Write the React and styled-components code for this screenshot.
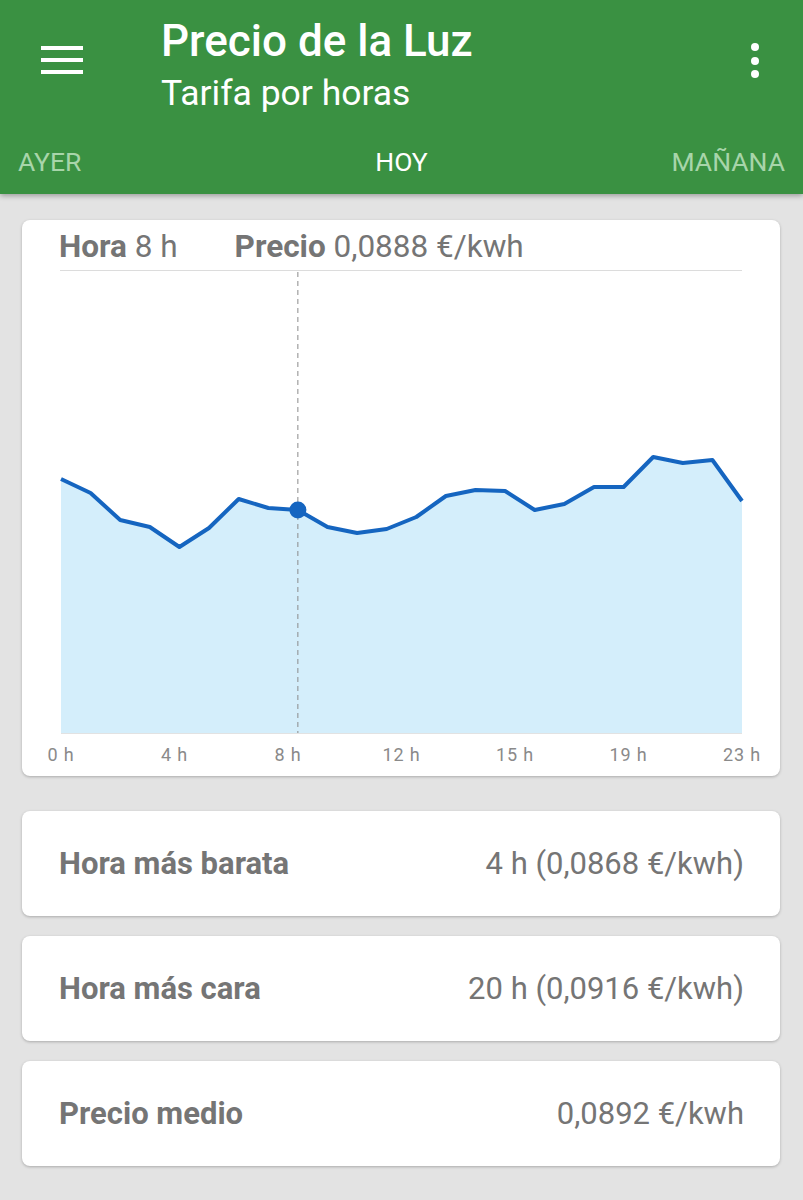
import React from "react";
import styled, { createGlobalStyle } from "styled-components";

const GlobalStyle = createGlobalStyle`
  html, body {
    margin: 0;
    padding: 0;
    background: #e3e3e3;
    font-family: Roboto, "Noto Sans", sans-serif;
  }
`;

// hourly prices, already mapped to chart pixels (y inside the svg)
const points = [
  209, 223, 250, 257, 277, 258, 229, 238, 240, 257, 263, 259,
  247, 226, 220, 221, 240, 234, 217, 217, 187, 193, 190, 231,
];

const CHART_W = 758;
const CHART_H = 500;
const X0 = 39;
const X1 = 720;
const BASE = 463;
const step = (X1 - X0) / 23;
const xAt = (h) => X0 + h * step;

// axis labels are spread evenly under the plot
const ticks = [0, 4, 8, 12, 15, 19, 23];
const tickX = (i) => X0 + (i * (X1 - X0)) / (ticks.length - 1);
const selected = 8;

const stats = [
  { label: "Hora más barata", value: "4 h (0,0868 €/kwh)" },
  { label: "Hora más cara", value: "20 h (0,0916 €/kwh)" },
  { label: "Precio medio", value: "0,0892 €/kwh" },
];

const PriceChart = () => {
  const line = points.map((y, h) => `${xAt(h).toFixed(1)},${y}`).join(" ");
  const area = `${X0},${BASE} ${line} ${X1},${BASE}`;
  const sx = xAt(selected);

  return (
    <Chart viewBox={`0 0 ${CHART_W} ${CHART_H}`} width={CHART_W} height={CHART_H}>
      <line x1={X0 - 1} x2={X1} y1="0.5" y2="0.5" stroke="#dcdcdc" strokeWidth="1" />
      <polygon points={area} fill="#d4eefb" />
      <line x1={X0} x2={X1} y1={BASE + 0.5} y2={BASE + 0.5} stroke="#e2e2e2" strokeWidth="1" />
      <line
        x1={sx}
        x2={sx}
        y1="2"
        y2={BASE}
        stroke="#8a8a8a"
        strokeWidth="1"
        strokeDasharray="5 4"
      />
      <polyline
        points={line}
        fill="none"
        stroke="#1565c0"
        strokeWidth="4"
        strokeLinejoin="round"
      />
      <circle cx={sx} cy={points[selected]} r="8.5" fill="#1565c0" />
      {ticks.map((h, i) => (
        <text
          key={h}
          x={tickX(i)}
          y={491}
          textAnchor="middle"
          fontSize="18"
          fill="#8a8a8a"
          fontFamily="Roboto, sans-serif"
          letterSpacing="0.8"
        >
          {h} h
        </text>
      ))}
    </Chart>
  );
};

const MenuIcon = () => (
  <svg width="44" height="32" viewBox="0 0 44 32">
    <rect x="0" y="0" width="42" height="4" fill="#fff" />
    <rect x="0" y="12" width="42" height="4" fill="#fff" />
    <rect x="0" y="24" width="42" height="4" fill="#fff" />
  </svg>
);

const MoreIcon = () => (
  <svg width="10" height="36" viewBox="0 0 10 36">
    <circle cx="5" cy="4" r="4" fill="#fff" />
    <circle cx="5" cy="18" r="4" fill="#fff" />
    <circle cx="5" cy="31" r="4" fill="#fff" />
  </svg>
);

const App = () => (
  <>
    <GlobalStyle />
    <Screen>
      <AppBar>
        <Toolbar>
          <IconButton>
            <MenuIcon />
          </IconButton>
          <Titles>
            <Title>Precio de la Luz</Title>
            <Subtitle>Tarifa por horas</Subtitle>
          </Titles>
          <IconButton $right>
            <MoreIcon />
          </IconButton>
        </Toolbar>
        <Tabs>
          <Tab $align="start">AYER</Tab>
          <Tab $align="center" $active>
            HOY
          </Tab>
          <Tab $align="end">MAÑANA</Tab>
        </Tabs>
      </AppBar>

      <Content>
        <ChartCard>
          <Readout>
            <span>
              <b>Hora</b> 8 h
            </span>
            <span>
              <b>Precio</b> 0,0888 €/kwh
            </span>
          </Readout>
          <PriceChart />
        </ChartCard>

        {stats.map((s) => (
          <StatCard key={s.label}>
            <StatLabel>{s.label}</StatLabel>
            <StatValue>{s.value}</StatValue>
          </StatCard>
        ))}
      </Content>
    </Screen>
  </>
);

export default App;

const Screen = styled.div`
  width: 803px;
  min-height: 1200px;
  background: #e3e3e3;
`;

const AppBar = styled.header`
  background: #3a9142;
  color: #fff;
  height: 194px;
  box-shadow: 0 2px 5px rgba(0, 0, 0, 0.3);
  position: relative;
`;

const Toolbar = styled.div`
  display: flex;
  align-items: flex-start;
  height: 128px;
`;

const IconButton = styled.div`
  width: ${(p) => (p.$right ? "40px" : "161px")};
  padding-top: ${(p) => (p.$right ? "43px" : "46px")};
  padding-left: ${(p) => (p.$right ? "0" : "41px")};
  box-sizing: border-box;
  display: flex;
  justify-content: ${(p) => (p.$right ? "center" : "flex-start")};
  margin-left: ${(p) => (p.$right ? "auto" : "0")};
  margin-right: ${(p) => (p.$right ? "28px" : "0")};
`;

const Titles = styled.div`
  display: flex;
  flex-direction: column;
  padding-top: 14px;
`;

const Title = styled.div`
  font-size: 44px;
  font-weight: 500;
  line-height: 54px;
`;

const Subtitle = styled.div`
  font-size: 35.5px;
  font-weight: 400;
  line-height: 46px;
  margin-top: 2px;
`;

const Tabs = styled.nav`
  display: grid;
  grid-template-columns: 1fr auto 1fr;
  align-items: center;
  padding: 0 18px;
  height: 66px;
`;

const Tab = styled.div`
  justify-self: ${(p) => p.$align};
  font-size: 26.5px;
  color: ${(p) => (p.$active ? "#ffffff" : "#a8d5aa")};
`;

const Content = styled.main`
  display: flex;
  flex-direction: column;
  padding: 26px 23px 0 22px;
`;

const Card = styled.section`
  background: #fff;
  border-radius: 8px;
  box-shadow: 0 1px 3px rgba(0, 0, 0, 0.25);
`;

const ChartCard = styled(Card)`
  height: 556px;
  margin-bottom: 35px;
  display: flex;
  flex-direction: column;
`;

const Readout = styled.div`
  display: flex;
  gap: 57px;
  padding: 10px 37px 0;
  height: 40px;
  font-size: 31.5px;
  line-height: 34px;
  color: #757575;

  b {
    font-weight: 700;
  }
`;

const Chart = styled.svg`
  display: block;
`;

const StatCard = styled(Card)`
  height: 105px;
  margin-bottom: 20px;
  display: flex;
  align-items: center;
  justify-content: space-between;
  padding: 0 36px 0 37px;
  font-size: 31px;
  color: #757575;
`;

const StatLabel = styled.div`
  font-weight: 700;
`;

const StatValue = styled.div`
  font-weight: 400;
`;
